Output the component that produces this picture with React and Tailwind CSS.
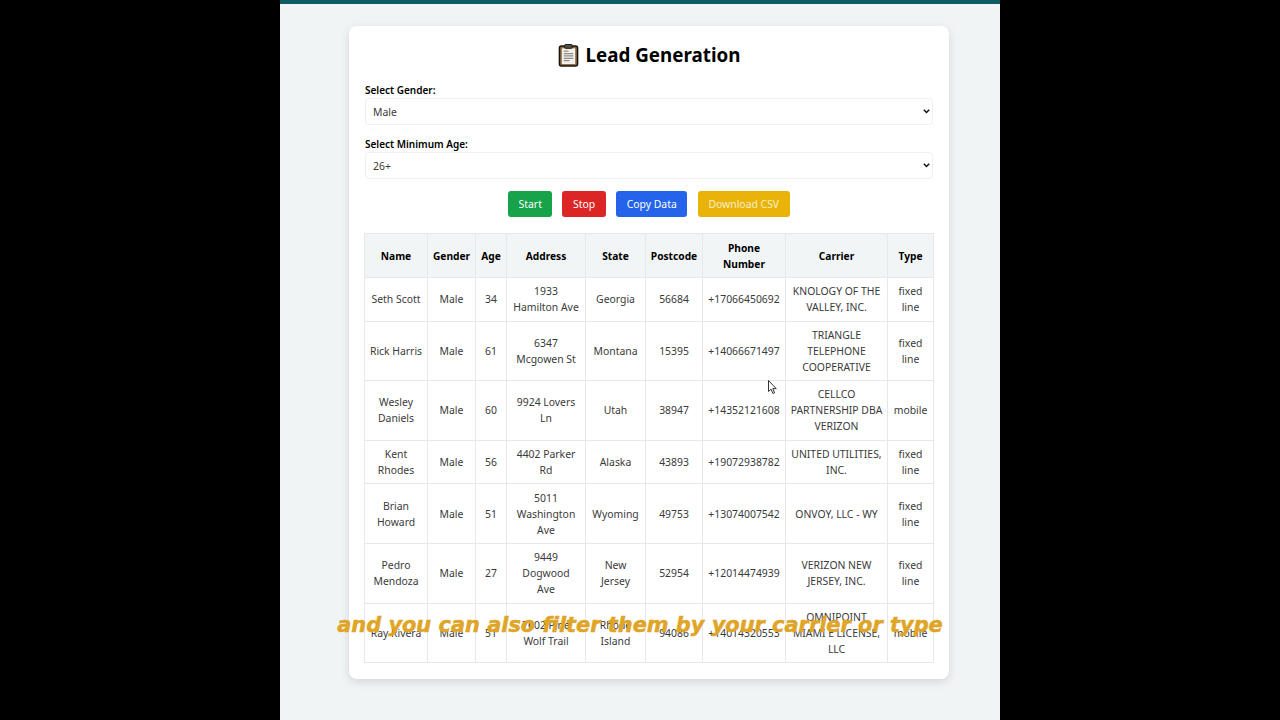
const rows = [
  ["Seth Scott", "Male", "34", "1933\nHamilton Ave", "Georgia", "56684", "+17066450692", "KNOLOGY OF THE\nVALLEY, INC.", "fixed\nline"],
  ["Rick Harris", "Male", "61", "6347\nMcgowen St", "Montana", "15395", "+14066671497", "TRIANGLE\nTELEPHONE\nCOOPERATIVE", "fixed\nline"],
  ["Wesley\nDaniels", "Male", "60", "9924 Lovers\nLn", "Utah", "38947", "+14352121608", "CELLCO\nPARTNERSHIP DBA\nVERIZON", "mobile"],
  ["Kent\nRhodes", "Male", "56", "4402 Parker\nRd", "Alaska", "43893", "+19072938782", "UNITED UTILITIES,\nINC.", "fixed\nline"],
  ["Brian\nHoward", "Male", "51", "5011\nWashington\nAve", "Wyoming", "49753", "+13074007542", "ONVOY, LLC - WY", "fixed\nline"],
  ["Pedro\nMendoza", "Male", "27", "9449\nDogwood\nAve", "New\nJersey", "52954", "+12014474939", "VERIZON NEW\nJERSEY, INC.", "fixed\nline"],
  ["Ray Rivera", "Male", "51", "7602 Pine\nWolf Trail", "Rhode\nIsland", "94086", "+14014320553", "OMNIPOINT\nMIAMI E LICENSE,\nLLC", "mobile"],
];

const headers = ["Name", "Gender", "Age", "Address", "State", "Postcode", "Phone\nNumber", "Carrier", "Type"];

const ClipboardIcon = () => (
  <svg width="21" height="24" viewBox="0 0 22 24">
    <rect x="1.5" y="2.5" width="19" height="21" rx="2" fill="#8a6a45" stroke="#1c1610" strokeWidth="1.6" />
    <rect x="4" y="5" width="14" height="16.5" fill="#f4f1ea" />
    <rect x="7" y="1" width="8" height="4" rx="1" fill="#55504a" stroke="#1c1610" />
    <path d="M6 8h5M6 10.5h10M6 13h10M6 15.5h10M6 18h6" stroke="#8c8c8c" strokeWidth="1.3" />
  </svg>
);

const Field = ({ label, options }) => (
  <div className="mb-[11px]">
    <label className="block text-[10px] leading-4 font-semibold text-black">{label}</label>
    <div className="relative">
      <select className="block w-full h-[27px] pl-[7px] pr-6 pt-[2px] appearance-none text-[10.4px] text-[#3a3a3a] bg-white border border-[#eef0f1] rounded">
        {options.map((o) => (
          <option key={o}>{o}</option>
        ))}
      </select>
      <svg className="absolute right-[3px] top-[11px]" width="7" height="5" viewBox="0 0 7 5">
        <path d="M.8.8l2.7 2.7L6.2.8" fill="none" stroke="#111" strokeWidth="1.5" />
      </svg>
    </div>
  </div>
);

export default function App() {
  return (
    <div className="relative h-screen overflow-hidden bg-black flex justify-center font-['Noto_Sans',sans-serif]">
      <div className="w-[720px] h-full bg-[#f0f4f5]">
        <div className="h-1 bg-[#0f5c63]" />
        <div className="w-[600px] h-[653px] mt-[22px] ml-[69px] px-4 pt-[16px] bg-white rounded-lg shadow-[0_3px_10px_rgba(0,0,0,0.12)]">
          <h1 className="flex items-center justify-center gap-[7px] h-[26px] mb-[14px] text-[18.8px] font-bold text-black">
            <ClipboardIcon /> Lead Generation
          </h1>
          <Field label="Select Gender:" options={["Male", "Female"]} />
          <Field label="Select Minimum Age:" options={["26+", "18+", "36+"]} />
          <div className="flex justify-center gap-[10.5px] mt-[12px] mb-[16px] text-[10.4px] text-white">
            <button className="h-[26px] w-[44px] pt-[2px] rounded-[3px] bg-[#16a34a]">Start</button>
            <button className="h-[26px] w-[43.5px] -ml-[0.5px] pt-[2px] rounded-[3px] bg-[#dc2626]">Stop</button>
            <button className="h-[26px] w-[71px] pt-[2px] rounded-[3px] bg-[#2563eb]">Copy Data</button>
            <button className="h-[26px] w-[92px] pt-[2px] rounded-[3px] bg-[#eab308] text-[#f8f0c8]">Download CSV</button>
          </div>
          <table className="w-[569px] -ml-px table-fixed border-collapse text-[10.4px] leading-4 text-[#3a3a3a]">
            <colgroup>
              <col className="w-[63px]" />
              <col className="w-[48px]" />
              <col className="w-[31px]" />
              <col className="w-[79px]" />
              <col className="w-[60px]" />
              <col className="w-[57px]" />
              <col className="w-[83px]" />
              <col className="w-[102px]" />
              <col className="w-[46px]" />
            </colgroup>
            <thead>
              <tr className="bg-[#f2f5f6]">
                {headers.map((h) => (
                  <th key={h} className="border border-[#e6e9ea] px-[2px] py-[5.5px] text-center text-[10.2px] font-bold text-black whitespace-pre-line">
                    {h}
                  </th>
                ))}
              </tr>
            </thead>
            <tbody>
              {rows.map((row) => (
                <tr key={row[0]}>
                  {row.map((cell, i) => (
                    <td key={i} className="border border-[#e6e9ea] px-[2px] py-[5.3px] text-center whitespace-pre-line">
                      {cell}
                    </td>
                  ))}
                </tr>
              ))}
            </tbody>
          </table>
        </div>
      </div>

      {/* video caption on top of the page */}
      <div className="absolute left-0 right-0 top-[611px] text-center text-[20.9px] leading-7 font-bold italic text-[#e0a526] [-webkit-text-stroke:0.5px_#e0a526] font-['DejaVu_Sans',sans-serif]">
        and you can also filter them by your carrier or type
      </div>

      {/* mouse pointer */}
      <svg className="absolute left-[768px] top-[380px]" width="9" height="15" viewBox="0 0 9 15">
        <path d="M.5.5v11l2.6-2.3 1.8 4.3 1.7-.7-1.8-4.2h3.4z" fill="#fff" stroke="#333" strokeWidth="1" />
      </svg>
    </div>
  );
}
